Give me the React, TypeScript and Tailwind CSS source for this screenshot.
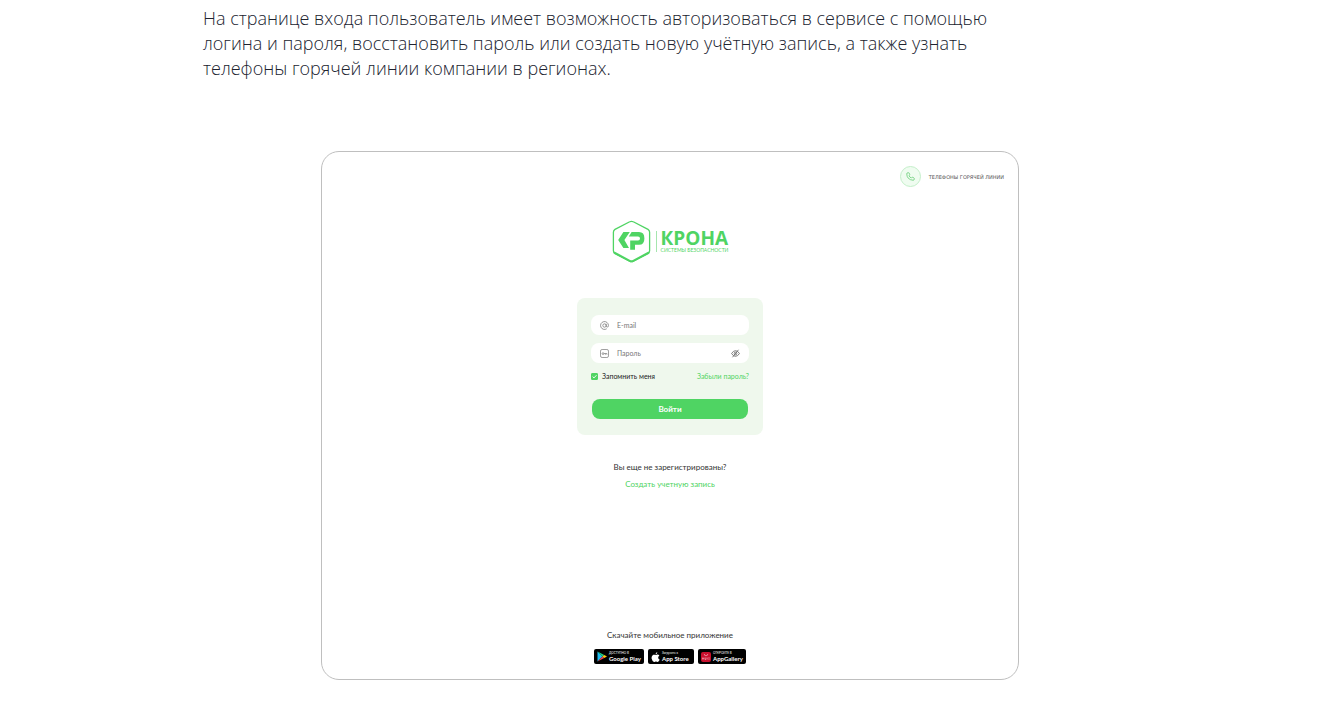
import { useState } from "react";

function Logo() {
  return (
    <div className="flex items-center text-[#4fd463]">
      <svg className="h-[43px] w-[39px]" viewBox="0 0 39 43" fill="none">
        <path
          d="M17.7 1.8 Q19.5 0.8 21.3 1.8 L36 9.4 Q37.6 10.4 37.6 12.2 V30.8 Q37.6 32.6 36 33.6 L21.3 41.2 Q19.5 42.2 17.7 41.2 L3 33.6 Q1.4 32.6 1.4 30.8 V12.2 Q1.4 10.4 3 9.4 Z"
          stroke="currentColor"
          strokeWidth="1.3"
        />
        <path d="M2 32.4 L17.7 40.8 Q19.5 41.8 21.3 40.8 L37 32.4" stroke="currentColor" strokeWidth="2" />
        <path d="M11.4 12 H17.8 L12.4 20 L17 28 H11.4 L6.2 20 Z" fill="currentColor" />
        <path
          d="M19.6 12 H27 Q32.4 12 32.4 18.4 Q32.4 24.8 27 24.8 H23 V29.8 H18.2 V20.6 H26 Q28 20.6 28 18.5 Q28 16.4 26 16.4 H16.8 Z"
          fill="currentColor"
        />
      </svg>
      <span className="ml-[5px] h-[21px] w-px bg-[#a5e6ae]" />
      <div className="ml-1 flex flex-col">
        <span className="font-['Open_Sans',sans-serif] text-[19px] leading-[18px] font-bold">КРОНА</span>
        <span className="text-[5px] leading-[7px] whitespace-nowrap">СИСТЕМЫ БЕЗОПАСНОСТИ</span>
      </div>
    </div>
  );
}

function KeyIcon() {
  return (
    <svg className="h-[9px] w-[9px]" viewBox="0 0 9 9" fill="none" stroke="#777" strokeWidth="0.7">
      <rect x="0.5" y="0.5" width="8" height="8" rx="1.6" />
      <circle cx="3" cy="4.6" r="0.9" />
      <path d="M3.9 4.6 H7 V5.6 M5.5 4.6 V5.6" />
    </svg>
  );
}

function AtIcon() {
  return (
    <svg className="h-[9px] w-[9px]" viewBox="0 0 24 24" fill="none" stroke="#777" strokeWidth="2">
      <circle cx="12" cy="12" r="4.5" />
      <path d="M16.5 7.5v5.5a3 3 0 0 0 6 0v-1a10.5 10.5 0 1 0-4.5 8.6" />
    </svg>
  );
}

function EyeOffIcon() {
  return (
    <svg className="h-[9px] w-[9px]" viewBox="0 0 24 24" fill="none" stroke="#666" strokeWidth="2.2">
      <path d="M1.5 12 Q6 4.5 12 4.5 Q18 4.5 22.5 12 Q18 19.5 12 19.5 Q6 19.5 1.5 12 Z" />
      <circle cx="12" cy="12" r="3.6" />
      <path d="M4 22 L20 2" />
    </svg>
  );
}

function PlayIcon() {
  return (
    <svg className="h-[11px] w-[10px]" viewBox="0 0 20 22">
      <path d="M1 1 L11 11 L1 21 Z" fill="#1fbcf0" />
      <path d="M1 1 L14.5 8 L11 11 Z" fill="#20d080" />
      <path d="M1 21 L14.5 14 L11 11 Z" fill="#ef4052" />
      <path d="M14.5 8 L20 11 L14.5 14 L11 11 Z" fill="#fdc915" />
    </svg>
  );
}

function AppleIcon() {
  return (
    <svg className="h-[10px] w-[9px]" viewBox="0 0 18 20" fill="#fff">
      <path d="M12.6 0 Q12.8 3.6 9.2 4.8 Q8.9 1.4 12.6 0 Z" />
      <path d="M9.2 6 Q10 6 11 5.5 Q14.6 4.2 16.8 7.2 Q14 9 14.4 12 Q14.8 14.6 17.4 15.6 Q15.6 20 13.2 19.9 Q11.4 19 9.4 19.2 Q7.6 20.2 6 19.8 Q2.4 18 1.2 12.8 Q0.6 7.4 4.6 5.5 Q6 5 7.6 5.6 Z" />
    </svg>
  );
}

function HuaweiIcon() {
  return (
    <svg className="h-[10px] w-[10px]" viewBox="0 0 20 20">
      <rect width="20" height="20" rx="4" fill="#c8102e" />
      <path d="M6.5 4 Q6.5 7.5 10 7.5 Q13.5 7.5 13.5 4" stroke="#f7c6ce" strokeWidth="1.2" fill="none" />
      <path d="M3 11 V15 M3 13 H5.5 M5.5 11 V15 M8 11 V15 H10 V11 M12.5 11 V15 M15 11 H17 M15 13 H17 M15 15 H17" stroke="#f7c6ce" fill="none" />
    </svg>
  );
}

const stores = [
  { name: "Google Play", note: "ДОСТУПНО В", icon: <PlayIcon />, width: "w-[50px]" },
  { name: "App Store", note: "Загрузите в", icon: <AppleIcon />, width: "w-[46px]" },
  { name: "AppGallery", note: "ОТКРОЙТЕ В", icon: <HuaweiIcon />, width: "w-[48px]" },
];

function LoginForm() {
  const [remember, setRemember] = useState(true);
  const [visible, setVisible] = useState(false);

  return (
    <form
      className="mt-[35px] flex w-[186px] flex-col rounded-lg bg-[#eff8ed] px-[14px] pt-[17px] pb-4"
      onSubmit={(e) => e.preventDefault()}
    >
      <label className="flex h-5 items-center gap-2 rounded-lg bg-white px-[9px]">
        <AtIcon />
        <input
          type="email"
          aria-label="E-mail"
          placeholder="E-mail"
          className="min-w-0 flex-1 text-[7px] leading-3 outline-none placeholder:text-[#777]"
        />
      </label>
      <div className="mt-2 flex h-5 items-center gap-2 rounded-lg bg-white px-[9px]">
        <KeyIcon />
        <input
          type={visible ? "text" : "password"}
          aria-label="Пароль"
          placeholder="Пароль"
          className="min-w-0 flex-1 text-[7px] leading-3 outline-none placeholder:text-[#777]"
        />
        <button type="button" aria-label="Показать пароль" onClick={() => setVisible(!visible)}>
          <EyeOffIcon />
        </button>
      </div>
      <div className="mt-[7px] flex items-center justify-between text-[7px] leading-3">
        <label className="flex items-center gap-1 text-[#222]">
          <span className="relative flex">
            <input
              type="checkbox"
              checked={remember}
              onChange={(e) => setRemember(e.target.checked)}
              className="h-[7px] w-[7px] appearance-none rounded-[1px] border border-[#4fd463] checked:bg-[#4fd463]"
            />
            {remember && (
              <svg className="pointer-events-none absolute inset-0 h-[7px] w-[7px]" viewBox="0 0 7 7">
                <path d="M1.6 3.5 L3 4.9 L5.5 2.2" stroke="#fff" strokeWidth="0.9" fill="none" />
              </svg>
            )}
          </span>
          Запомнить меня
        </label>
        <a href="#" className="text-[#4fd463]">
          Забыли пароль?
        </a>
      </div>
      <button
        type="submit"
        className="mx-px mt-[17px] h-5 rounded-lg bg-[#4fd463] text-[8px] leading-3 font-bold text-white"
      >
        Войти
      </button>
    </form>
  );
}

export default function App() {
  return (
    <main className="bg-white pt-[6px] pb-7 font-[Lato,'Liberation_Sans',sans-serif]">
      <p className="mx-auto max-w-[934px] pr-[130px] font-['Open_Sans',sans-serif] text-[18px] leading-[25px] font-light text-[#20232f]">
        На странице входа пользователь имеет возможность авторизоваться в сервисе с помощью логина и
        пароля, восстановить пароль или создать новую учётную запись, а также узнать телефоны горячей
        линии компании в регионах.
      </p>
      <section className="mx-auto mt-[70px] flex max-w-[698px] flex-col items-center rounded-[18px] border border-[#bfbfbf] px-[14px] pt-[14px] pb-[15px]">
        <a href="#" className="flex items-center gap-2 self-end leading-3 text-[#555]">
          <span className="flex h-[21px] w-[21px] items-center justify-center rounded-full border border-[#c4efca] bg-[#effcf0]">
            <svg className="h-[9px] w-[9px]" viewBox="0 0 24 24" fill="none" stroke="#5cc96c" strokeWidth="2">
              <path d="M2 5 Q2 2 5 2 L7 2 Q8.5 2 9 4 L10 7 Q10 8.5 8 10 Q10 14 14 16 Q15.5 14 17 14 L20.5 15.2 Q22 16 22 17.5 V19 Q22 22 19 22 Q11 21.5 6 16.5 Q2 12 2 5 Z" />
            </svg>
          </span>
          <span className="font-['DejaVu_Sans',sans-serif] text-[5px]">ТЕЛЕФОНЫ ГОРЯЧЕЙ ЛИНИИ</span>
        </a>
        <div className="mt-[33px]">
          <Logo />
        </div>
        <LoginForm />
        <p className="mt-[26px] text-[8px] leading-3 text-[#333]">Вы еще не зарегистрированы?</p>
        <a href="#" className="mt-[5px] text-[8px] leading-3 text-[#4fd463]">
          Создать учетную запись
        </a>
        <p className="mt-[139px] text-[8px] leading-3 text-[#333]">Скачайте мобильное приложение</p>
        <div className="mt-2 flex gap-1">
          {stores.map((store) => (
            <a
              key={store.name}
              href="#"
              className={`flex h-[15px] items-center gap-[2px] rounded-[2px] bg-black pl-[3px] text-white ${store.width}`}
            >
              <span className="shrink-0">{store.icon}</span>
              <span className="flex flex-col whitespace-nowrap">
                <span className="text-[3px] leading-[4px]">{store.note}</span>
                <span className="text-[6px] leading-[7px] font-bold">{store.name}</span>
              </span>
            </a>
          ))}
        </div>
      </section>
    </main>
  );
}
